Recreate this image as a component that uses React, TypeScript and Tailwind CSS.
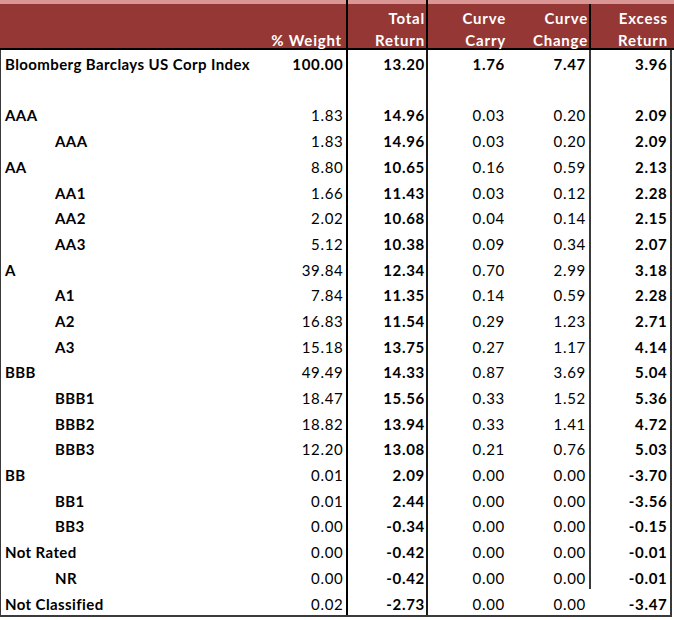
import React from 'react'

interface Row {
  label: string
  sub?: boolean
  strong?: boolean
  last?: boolean
  vals: string[]
}

const rows: Row[] = [
  { label: 'Bloomberg Barclays US Corp Index', strong: true, vals: ['100.00', '13.20', '1.76', '7.47', '3.96'] },
  { label: '', vals: ['', '', '', '', ''] },
  { label: 'AAA', vals: ['1.83', '14.96', '0.03', '0.20', '2.09'] },
  { label: 'AAA', sub: true, vals: ['1.83', '14.96', '0.03', '0.20', '2.09'] },
  { label: 'AA', vals: ['8.80', '10.65', '0.16', '0.59', '2.13'] },
  { label: 'AA1', sub: true, vals: ['1.66', '11.43', '0.03', '0.12', '2.28'] },
  { label: 'AA2', sub: true, vals: ['2.02', '10.68', '0.04', '0.14', '2.15'] },
  { label: 'AA3', sub: true, vals: ['5.12', '10.38', '0.09', '0.34', '2.07'] },
  { label: 'A', vals: ['39.84', '12.34', '0.70', '2.99', '3.18'] },
  { label: 'A1', sub: true, vals: ['7.84', '11.35', '0.14', '0.59', '2.28'] },
  { label: 'A2', sub: true, vals: ['16.83', '11.54', '0.29', '1.23', '2.71'] },
  { label: 'A3', sub: true, vals: ['15.18', '13.75', '0.27', '1.17', '4.14'] },
  { label: 'BBB', vals: ['49.49', '14.33', '0.87', '3.69', '5.04'] },
  { label: 'BBB1', sub: true, vals: ['18.47', '15.56', '0.33', '1.52', '5.36'] },
  { label: 'BBB2', sub: true, vals: ['18.82', '13.94', '0.33', '1.41', '4.72'] },
  { label: 'BBB3', sub: true, vals: ['12.20', '13.08', '0.21', '0.76', '5.03'] },
  { label: 'BB', vals: ['0.01', '2.09', '0.00', '0.00', '-3.70'] },
  { label: 'BB1', sub: true, vals: ['0.01', '2.44', '0.00', '0.00', '-3.56'] },
  { label: 'BB3', sub: true, vals: ['0.00', '-0.34', '0.00', '0.00', '-0.15'] },
  { label: 'Not Rated', vals: ['0.00', '-0.42', '0.00', '0.00', '-0.01'] },
  { label: 'NR', sub: true, vals: ['0.00', '-0.42', '0.00', '0.00', '-0.01'] },
  { label: 'Not Classified', last: true, vals: ['0.02', '-2.73', '0.00', '0.00', '-3.47'] },
]

// header cells: two-line caption, column width, right padding, divider on the right
const headers = [
  { a: '', b: '% Weight', w: 'w-[348px]', pr: 'pr-[4px]', line: true },
  { a: 'Total', b: 'Return', w: 'w-[80px]', pr: 'pr-[1px]', line: true },
  { a: 'Curve', b: 'Carry', w: 'w-[80px]', pr: 'pr-[2px]', line: false },
  { a: 'Curve', b: 'Change', w: 'w-[83px]', pr: 'pr-[1px]', line: true },
  { a: 'Excess', b: 'Return', w: 'w-[83px]', pr: 'pr-[6px]', line: false },
]

export default function App() {
  return (
    <div className="w-[674px] h-[620px] bg-white text-black font-['Lato',sans-serif] text-[15px] overflow-hidden">
      {/* cut-off title row above the header */}
      <div className="flex h-[4px] bg-[#d99694]">
        <div className="w-[348px] border-r-2 border-black" />
        <div className="w-[80px] border-r-2 border-black" />
      </div>

      {/* header */}
      <div className="flex h-[46px] bg-[#953735] border-b-2 border-black text-white font-bold tracking-[0.8px] leading-[16px]">
        {headers.map((h, i) => (
          <div
            key={i}
            className={`${h.w} ${h.pr} flex flex-col gap-[6px] items-end justify-end ${h.line ? 'border-r-2 border-black' : ''}`}
          >
            <span>{h.a}</span>
            <span>{h.b}</span>
          </div>
        ))}
      </div>

      {/* body */}
      <div className="w-[672px] border-l border-b-2 border-r-2 border-l-[#3a3a3a] border-b-[#3a3a3a] border-r-[#3a3a3a]">
        {rows.map((r, ri) => (
          <div key={ri} className="flex h-[25.7px]">
            <div className="w-[347px] flex items-center justify-between border-r-2 border-black pt-[3px] pr-[2.5px]">
              <span className={`font-bold tracking-[0.4px] ${r.sub ? 'pl-[54px]' : 'pl-[4px]'}`}>{r.label}</span>
              <span className={`tracking-[0.7px] ${r.strong ? 'font-bold' : ''}`}>{r.vals[0]}</span>
            </div>
            <div className="w-[80px] flex items-center justify-end border-r-2 border-[#1a1a1a] pt-[3px] pr-[1px] font-bold tracking-[0.7px]">
              {r.vals[1]}
            </div>
            <div className={`w-[80px] flex items-center justify-end pt-[3px] pr-[3px] tracking-[0.7px] ${r.strong ? 'font-bold' : ''}`}>
              {r.vals[2]}
            </div>
            <div
              className={`w-[83px] flex items-center justify-end pt-[3px] pr-[3px] tracking-[0.7px] ${
                r.strong ? 'font-bold' : ''
              } ${r.last ? 'border-r-2 border-transparent' : 'border-r-2 border-[#3a3a3a]'}`}
            >
              {r.vals[3]}
            </div>
            <div className="w-[79px] flex items-center justify-end pt-[3px] pr-[2.5px] font-bold tracking-[0.7px]">
              {r.vals[4]}
            </div>
          </div>
        ))}
      </div>
    </div>
  )
}
